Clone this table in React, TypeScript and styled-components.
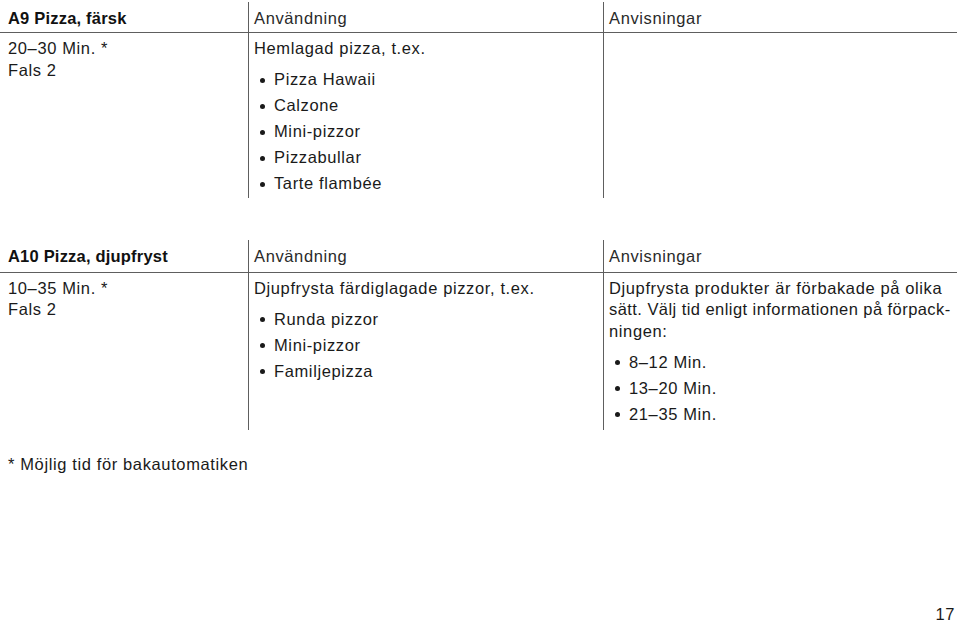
import React from "react";
import styled, { createGlobalStyle } from "styled-components";

const Global = createGlobalStyle`
  html, body { margin: 0; padding: 0; background: #fff; }
  body {
    font-family: "Liberation Sans", Arial, Helvetica, sans-serif;
    color: #1a1a1a;
  }
`;

const Page = styled.div`
  width: 959px;
  height: 623px;
  box-sizing: border-box;
  padding-top: 2px;
  display: flex;
  flex-direction: column;
  font-size: 16.5px;
  letter-spacing: 0.62px;
  line-height: 21.5px;
`;

const Table = styled.div<{ $mt?: number }>`
  width: 957px;
  margin-top: ${(p) => p.$mt ?? 0}px;
  display: grid;
  grid-template-columns: 248px 355px 1fr;
`;

const Head = styled.div<{ $first?: boolean; $h: number }>`
  height: ${(p) => p.$h}px;
  box-sizing: border-box;
  padding: 6px 0 0 ${(p) => (p.$first ? 8 : 5)}px;
  border-bottom: 1px solid #5e5e5e;
  border-left: ${(p) => (p.$first ? "none" : "1px solid #5e5e5e")};
  font-weight: ${(p) => (p.$first ? 700 : 400)};
  letter-spacing: ${(p) => (p.$first ? "0.2px" : "0.62px")};
  color: ${(p) => (p.$first ? "#111" : "#2a2a2a")};
`;

const Cell = styled.div<{ $first?: boolean; $pt: number; $pb: number }>`
  box-sizing: border-box;
  padding: ${(p) => p.$pt}px 0 ${(p) => p.$pb}px ${(p) => (p.$first ? 8 : 5)}px;
  border-left: ${(p) => (p.$first ? "none" : "1px solid #5e5e5e")};
`;

const Para = styled.div<{ $tight?: boolean }>`
  white-space: nowrap;
  letter-spacing: ${(p) => (p.$tight ? "0.44px" : "inherit")};
`;

const List = styled.ul`
  list-style: none;
  margin: 9.5px 0 0 0;
  padding: 0;
`;

const Item = styled.li`
  position: relative;
  padding-left: 20px;
  margin-top: 4.5px;
  &:first-child { margin-top: 0; }
  &::before {
    content: "";
    position: absolute;
    left: 5.5px;
    top: 8.5px;
    width: 5px;
    height: 5px;
    border-radius: 50%;
    background: #1a1a1a;
  }
`;

const Footnote = styled.div`
  margin-top: 24px;
  padding-left: 8px;
`;

const PageNo = styled.div`
  margin-top: auto;
  padding-right: 4px;
  text-align: right;
  height: 18px;
  line-height: 18px;
`;

export default function App() {
  return (
    <>
      <Global />
      <Page>
        <Table>
          <Head $first $h={31}>A9 Pizza, färsk</Head>
          <Head $h={31}>Användning</Head>
          <Head $h={31}>Anvisningar</Head>
          <Cell $first $pt={5} $pb={3}>
            <Para>20–30 Min. *</Para>
            <Para>Fals 2</Para>
          </Cell>
          <Cell $pt={5} $pb={3}>
            <Para>Hemlagad pizza, t.ex.</Para>
            <List>
              <Item>Pizza Hawaii</Item>
              <Item>Calzone</Item>
              <Item>Mini-pizzor</Item>
              <Item>Pizzabullar</Item>
              <Item>Tarte flambée</Item>
            </List>
          </Cell>
          <Cell $pt={5} $pb={3} />
        </Table>

        <Table $mt={42}>
          <Head $first $h={33}>A10 Pizza, djupfryst</Head>
          <Head $h={33}>Användning</Head>
          <Head $h={33}>Anvisningar</Head>
          <Cell $first $pt={5} $pb={5}>
            <Para>10–35 Min. *</Para>
            <Para>Fals 2</Para>
          </Cell>
          <Cell $pt={5} $pb={5}>
            <Para>Djupfrysta färdiglagade pizzor, t.ex.</Para>
            <List>
              <Item>Runda pizzor</Item>
              <Item>Mini-pizzor</Item>
              <Item>Familjepizza</Item>
            </List>
          </Cell>
          <Cell $pt={5} $pb={5}>
            <Para>Djupfrysta produkter är förbakade på olika</Para>
            <Para $tight>sätt. Välj tid enligt informationen på förpack-</Para>
            <Para>ningen:</Para>
            <List>
              <Item>8–12 Min.</Item>
              <Item>13–20 Min.</Item>
              <Item>21–35 Min.</Item>
            </List>
          </Cell>
        </Table>

        <Footnote>* Möjlig tid för bakautomatiken</Footnote>
        <PageNo>17</PageNo>
      </Page>
    </>
  );
}
